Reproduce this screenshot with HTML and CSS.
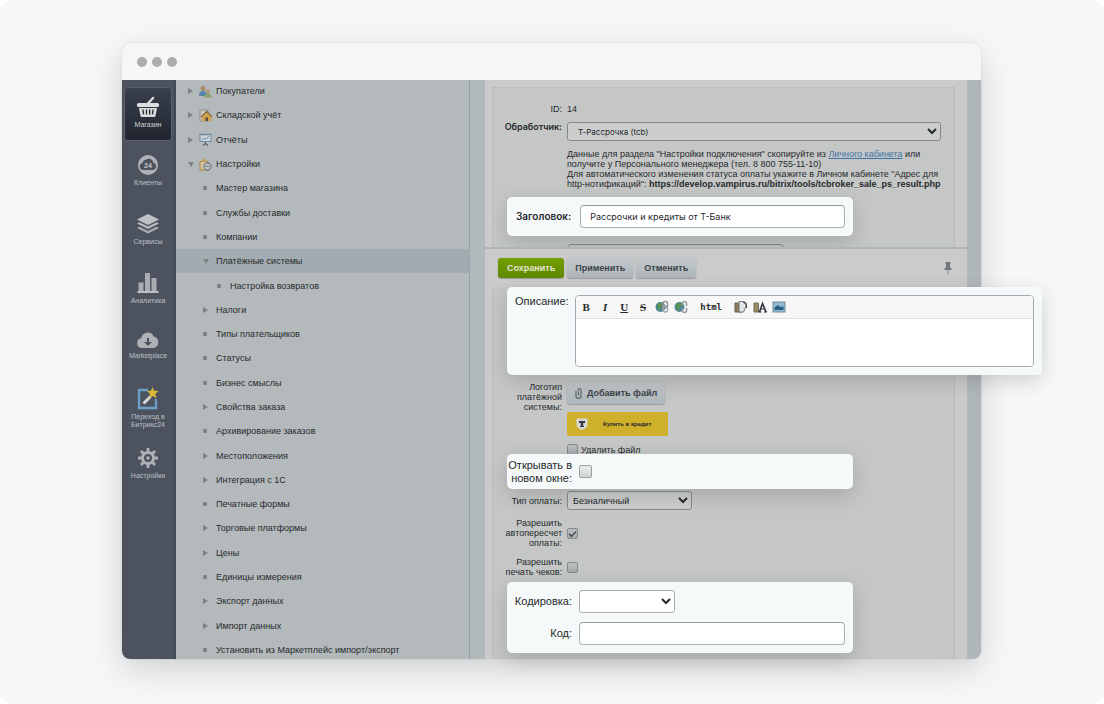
FILE: index.html
```
<!DOCTYPE html>
<html lang="ru">
<head>
    <meta charset="UTF-8">
    <meta name="viewport" content="width=device-width, initial-scale=1.0">
    <title>Настройка платёжной системы</title>
    <link rel="stylesheet" href="styles.css">
</head>
<body>
<div class="page">
    <div class="window">
        <div class="titlebar"><span></span><span></span><span></span></div>

        <div class="workspace">
            <!-- Главное меню -->
            <nav class="rail">
                <button class="rail-item active" type="button">
                    <svg width="24" height="22" viewBox="0 0 24 22"><path d="M11.500 8l5.500-6" stroke="#dcdddf" stroke-width="2.400" stroke-linecap="round"/><rect x="1" y="7" width="22" height="4" rx="1.500" fill="#dcdddf"/><path d="M3 12h18l-1.600 8.200q-.2.8-1 .8H5.600q-.8 0-1-.8z" fill="#dcdddf"/><path d="M7 13.500l.5 5M10.500 13.500v5M13.700 13.500v5M17 13.500l-.5 5" stroke="#2b303a" stroke-width="1.400"/></svg>
                    <span>Магазин</span>
                </button>
                <button class="rail-item" type="button">
                    <svg width="22" height="22" viewBox="0 0 22 22"><circle cx="11" cy="11" r="10" fill="#aeb2b7"/><path d="M6 16a3.600 3.600 0 0 1-.6-7A4 4 0 0 1 9 5.800a4.600 4.600 0 0 1 7.500 3A3.700 3.700 0 0 1 16 16z" fill="#4c535f"/><text x="11" y="14" text-anchor="middle" class="cloud-num">24</text></svg>
                    <span>Клиенты</span>
                </button>
                <button class="rail-item" type="button">
                    <svg width="24" height="22" viewBox="0 0 24 22"><path d="M12 1l11 5.500L12 12 1 6.500z" fill="#c0c3c6"/><path d="M1 10.500l2.500-1.200 8.500 4.200 8.500-4.200 2.500 1.200L12 16z" fill="#b5b9bd"/><path d="M1 15l2.500-1.200L12 18l8.500-4.200L23 15l-11 5.500z" fill="#a9adb2"/></svg>
                    <span>Сервисы</span>
                </button>
                <button class="rail-item" type="button">
                    <svg width="24" height="22" viewBox="0 0 24 22"><path d="M2.500 10.500h5V19h-5zM9 1h5v18H9zM15.500 6h5v13h-5z" fill="#a9adb2"/><path d="M1.500 19h21v2h-21z" fill="#bbbec2"/></svg>
                    <span>Аналитика</span>
                </button>
                <button class="rail-item" type="button">
                    <svg width="24" height="18" viewBox="0 0 24 18"><path d="M6 17a5 5 0 0 1-.8-9.900A6.500 6.500 0 0 1 17.600 5.600 5.800 5.800 0 0 1 17.500 17z" fill="#aeb2b7"/><path d="M11 7h2v4h3l-4 4-4-4h3z" fill="#4c535f"/></svg>
                    <span>Marketplace</span>
                </button>
                <button class="rail-item" type="button">
                    <svg width="24" height="24" viewBox="0 0 24 24"><path d="M12 4H3v18h17v-9" fill="none" stroke="#6d9fc6" stroke-width="2.400"/><path d="M7.500 17.500l7-7" stroke="#d5d7d9" stroke-width="3"/><path d="M16.500 1l1.700 3.800 4.300.2-3.200 3 1.200 4.200-3.700-2.200-3.700 2.200 1-4.200-3.100-3 4-.3z" fill="#dcb736"/></svg>
                    <span>Переход в Битрикс24</span>
                </button>
                <button class="rail-item" type="button">
                    <svg width="22" height="22" viewBox="0 0 22 22"><circle cx="11" cy="11" r="5.500" fill="none" stroke="#aeb2b7" stroke-width="3"/><path d="M11 1v4M11 17v4M1 11h4M17 11h4M3.900 3.900l2.800 2.800M15.300 15.300l2.800 2.800M3.900 18.100l2.800-2.800M15.300 6.700l2.800-2.800" stroke="#aeb2b7" stroke-width="2.800"/><circle cx="11" cy="11" r="1.800" fill="#aeb2b7"/></svg>
                    <span>Настройки</span>
                </button>
            </nav>

            <!-- Дерево разделов -->
            <aside class="tree">
                <ul>
                    <li class="closed"><svg width="13" height="13" viewBox="0 0 13 13"><circle cx="4" cy="3.500" r="2.500" fill="#a88a66"/><path d="M0 11q0-5 4-5t4 5z" fill="#5583ad"/><circle cx="9" cy="6" r="2" fill="#b39873"/><path d="M5.500 12.500q0-4.500 3.500-4.500t3.500 4.500z" fill="#8b9d70"/></svg><a href="#">Покупатели</a></li>
                    <li class="closed"><svg width="13" height="13" viewBox="0 0 13 13"><path d="M1 1h8v11H1z" fill="#c9c7bf" stroke="#8d9190"/><path d="M3 7.500L7.800 3l4.700 4.500V12H3z" fill="#d0a34e"/><path d="M2 8l5.800-5.500L13 8" fill="none" stroke="#85683a" stroke-width="1.300"/><path d="M6.500 8.500H9V12H6.500z" fill="#55493a"/></svg><a href="#">Складской учёт</a></li>
                    <li class="closed"><svg width="13" height="13" viewBox="0 0 13 13"><rect x="1" y="1.500" width="11" height="7" fill="#cbd4da" stroke="#6f8ba0"/><path d="M.5 1.500h12" stroke="#6f8ba0" stroke-width="1.500"/><path d="M3 7l2-1.500 2 .5 3-3" fill="none" stroke="#6990ad"/><path d="M6.500 9v2M4 12.500l2.500-2 2.500 2" fill="none" stroke="#59636a" stroke-width="1.200"/></svg><a href="#">Отчёты</a></li>
                    <li class="opened"><svg width="13" height="13" viewBox="0 0 13 13"><path d="M1 3.500h8v8.500H1z" fill="#d1c5aa" stroke="#b4883b"/><path d="M3 3.500q0-3 2-3t2 3z" fill="#c4a56f"/><circle cx="8.500" cy="8.500" r="3.500" fill="#c1c5c7" stroke="#7e8588" stroke-width="1.400"/><path d="M6.500 8.500h4" stroke="#71787b"/></svg><a href="#">Настройки</a></li>
                    <li class="sub leaf"><a href="#">Мастер магазина</a></li>
                    <li class="sub leaf"><a href="#">Службы доставки</a></li>
                    <li class="sub leaf"><a href="#">Компании</a></li>
                    <li class="sub opened current"><a href="#">Платёжные системы</a></li>
                    <li class="subsub leaf"><a href="#">Настройка возвратов</a></li>
                    <li class="sub closed"><a href="#">Налоги</a></li>
                    <li class="sub leaf"><a href="#">Типы плательщиков</a></li>
                    <li class="sub leaf"><a href="#">Статусы</a></li>
                    <li class="sub leaf"><a href="#">Бизнес смыслы</a></li>
                    <li class="sub closed"><a href="#">Свойства заказа</a></li>
                    <li class="sub leaf"><a href="#">Архивирование заказов</a></li>
                    <li class="sub closed"><a href="#">Местоположения</a></li>
                    <li class="sub closed"><a href="#">Интеграция с 1С</a></li>
                    <li class="sub leaf"><a href="#">Печатные формы</a></li>
                    <li class="sub closed"><a href="#">Торговые платформы</a></li>
                    <li class="sub closed"><a href="#">Цены</a></li>
                    <li class="sub leaf"><a href="#">Единицы измерения</a></li>
                    <li class="sub closed"><a href="#">Экспорт данных</a></li>
                    <li class="sub closed"><a href="#">Импорт данных</a></li>
                    <li class="sub leaf"><a href="#">Установить из Маркетплейс импорт/экспорт</a></li>
                </ul>
            </aside>

            <!-- Форма -->
            <form class="editor">
                <section class="panel panel-top">
                    <div class="row row-id"><span class="label">ID:</span><span>14</span></div>
                    <div class="row row-handler">
                        <label class="label strong" for="handler">Обработчик:</label>
                        <select id="handler" class="select wide"><option>Т-Рассрочка (tcb)</option></select>
                    </div>
                    <p class="hint">Данные для раздела "Настройки подключения" скопируйте из <a href="#">Личного кабинета</a> или<br>получите у Персонального менеджера (тел. 8 800 755-11-10)<br>Для автоматического изменения статуса оплаты укажите в Личном кабинете "Адрес для<br>http-нотификаций": <b>https://develop.vampirus.ru/bitrix/tools/tcbroker_sale_ps_result.php</b></p>
                    <div class="card card-title">
                        <label class="strong" for="title">Заголовок:</label>
                        <input id="title" class="field" type="text" value="Рассрочки и кредиты от Т-Банк">
                    </div>
                    <input class="field cut" type="text" aria-label="Название">
                </section>

                <div class="actions">
                    <button class="btn save" type="button">Сохранить</button>
                    <button class="btn" type="button">Применить</button>
                    <button class="btn" type="button">Отменить</button>
                    <button class="pin" type="button" aria-label="Закрепить"><svg width="8" height="12" viewBox="0 0 8 12"><path d="M1.500 0h5v1.500H6V5l1.500 1.500V8h-7V6.500L2 5V1.500h-.5z" fill="#72787c"/><path d="M4 8v4" stroke="#8b9094"/></svg></button>
                </div>

                <section class="panel panel-bottom">
                    <div class="card card-text">
                        <label for="descr">Описание:</label>
                        <div class="html-editor">
                            <div class="toolbar">
                                <button type="button"><b>B</b></button>
                                <button type="button"><b><i>I</i></b></button>
                                <button type="button"><b><u>U</u></b></button>
                                <button type="button"><b><s>S</s></b></button>
                                <button type="button" aria-label="Ссылка"><svg width="14" height="14" viewBox="0 0 14 14"><circle cx="5.500" cy="7" r="5" fill="#4c84a0"/><path d="M2 4l4-1.500L8 5 5 8l1 3-3-1z" fill="#5b944e"/><rect x="8" y="1.500" width="4.500" height="6" rx="2" fill="none" stroke="#8c9093" stroke-width="1.500"/><rect x="8" y="6" width="4.500" height="6" rx="2" fill="none" stroke="#a2a5a7" stroke-width="1.500"/></svg></button>
                                <button type="button" aria-label="Убрать ссылку"><svg width="14" height="14" viewBox="0 0 14 14"><circle cx="5.500" cy="7" r="5" fill="#4c84a0"/><path d="M2 4l4-1.500L8 5 5 8l1 3-3-1z" fill="#5b944e"/><path d="M8.500 6V3.500q0-2 2-2t2 2V6M8.500 8v2.500q0 2 2 2t2-2V8" fill="none" stroke="#9b9ea0" stroke-width="1.600"/></svg></button>
                                <button class="source" type="button">html</button>
                                <button type="button" aria-label="Вставить"><svg width="14" height="14" viewBox="0 0 14 14"><path d="M1 3h7v9H1z" fill="#8c7b55" stroke="#67624d"/><path d="M5 1.500h4l3.500 4-3 6.500H5z" fill="#e2e6e8" stroke="#6e777b"/><path d="M9 2q4 0 3.500 6" fill="none" stroke="#414a4e" stroke-width="1.300"/></svg></button>
                                <button type="button" aria-label="Вставить текст"><svg width="14" height="14" viewBox="0 0 14 14"><path d="M1 3h4.500v9H1z" fill="#9a8c62" stroke="#777057"/><path d="M6.500 12l3-8.500L13 12" fill="none" stroke="#30353b" stroke-width="1.600"/><path d="M8 9h4M5.500 12h3M11 12h3" stroke="#30353b"/></svg></button>
                                <button type="button" aria-label="Картинка"><svg width="14" height="14" viewBox="0 0 14 14"><rect x="1" y="2" width="12" height="10" fill="#92bad2" stroke="#738c9c"/><path d="M2.500 10V7.500L6 5l2 2 3.500-.5V10z" fill="#285d85"/></svg></button>
                            </div>
                            <textarea id="descr"></textarea>
                        </div>
                    </div>

                    <div class="row row-logo">
                        <span class="label">Логотип платёжной системы:</span>
                        <div class="logo-cell">
                            <button class="btn file" type="button"><svg width="7" height="11" viewBox="0 0 7 11"><path d="M3.500 3v4.500M1 3v5q0 2.300 2.500 2.300T6 8V2.500Q6 .7 4.500.7T3 2.500" fill="none" stroke="#666c73" stroke-width="1.300"/></svg>Добавить файл</button>
                            <div class="credit"><svg width="12" height="12" viewBox="0 0 12 12"><path d="M.5.500h11v6Q11.500 10 6 12 .5 10 .5 6.500z" fill="#d8d8d4"/><path d="M3 3h6v2H7.200v3H8v1H4V8h.8V5H3z" fill="#35383a"/></svg><span>Купить в кредит</span></div>
                            <label class="check-line"><input class="check" type="checkbox">Удалить файл</label>
                        </div>
                    </div>

                    <div class="card card-check">
                        <label for="newwin">Открывать в новом окне:</label>
                        <input id="newwin" class="check big" type="checkbox">
                    </div>

                    <div class="row">
                        <label class="label" for="paytype">Тип оплаты:</label>
                        <select id="paytype" class="select"><option>Безналичный</option></select>
                    </div>
                    <div class="row">
                        <label class="label" for="recalc">Разрешить автопересчет оплаты:</label>
                        <input id="recalc" class="check" type="checkbox" checked>
                    </div>
                    <div class="row">
                        <label class="label" for="print">Разрешить печать чеков:</label>
                        <input id="print" class="check" type="checkbox">
                    </div>

                    <div class="card card-code">
                        <label for="enc">Кодировка:</label>
                        <select id="enc" class="select white"><option></option></select>
                        <label for="code">Код:</label>
                        <input id="code" class="field" type="text">
                    </div>
                </section>
            </form>
            <div class="edge"></div>
        </div>
    </div>
</div>
</body>
</html>
```
FILE: styles.css
```
* {
    box-sizing: border-box;
}
body {
    margin: 0;
    background: #fff;
    font-family: "Liberation Sans", Arial, sans-serif;
    font-size: 9px;
    line-height: 10px;
    color: #26292b;
}
button, input, select, textarea {
    font: inherit;
    color: inherit;
    margin: 0;
}
button {
    padding: 0;
    border: 0;
    background: none;
}
.page {
    min-height: 100vh;
    padding: 43px 123px 44px 122px;
    background: #f5f7f8;
    border-radius: 14px;
    overflow: hidden;
}
/* Окно */
.window {
    border-radius: 10px;
    box-shadow: 0 10px 32px rgba(0, 0, 0, 0.16), 0 0 2px rgba(0, 0, 0, 0.14);
}
.titlebar {
    display: flex;
    align-items: center;
    gap: 5px;
    height: 37px;
    padding-left: 15px;
    background: #f7f5f6;
    border-radius: 10px 10px 0 0;
}
.titlebar span {
    width: 10px;
    height: 10px;
    border-radius: 50%;
    background: #adadad;
}
.workspace {
    display: flex;
}
/* Левая колонка */
.rail {
    display: flex;
    flex-direction: column;
    gap: 16px;
    width: 54px;
    padding: 8px 3px 0;
    background: #4c535f;
    border-right: 2px solid #434a57;
    border-radius: 0 0 0 8px;
}
.rail-item {
    display: flex;
    flex-direction: column;
    align-items: center;
    gap: 3px;
    font-size: 7px;
    line-height: 8px;
    color: #bcc0c5;
}
.rail-item span {
    min-height: 18px;
}
.rail-item.active {
    height: 52px;
    margin-bottom: -2px;
    padding-top: 8px;
    background: linear-gradient(#3a404c, #20252f);
    border-radius: 3px;
    box-shadow: 0 0 0 1px #5b626d;
    color: #d0d2d5;
}
.cloud-num {
    font-size: 7px;
    font-weight: bold;
    fill: #c0c3c6;
}
.tree {
    width: 294px;
    overflow: hidden;
    background: #b4babc;
    border-right: 1px solid #94a3aa;
}
.tree ul {
    display: flex;
    flex-direction: column;
    height: calc(100% + 4px);
    margin: -1px 0 -3px;
    padding: 0;
    list-style: none;
}
.tree li {
    display: flex;
    flex: 1 1 0;
    align-items: center;
    padding-left: 12px;
}
.tree li::before {
    content: '';
    flex: none;
    margin-right: 6px;
}
.tree li svg {
    flex: none;
    margin-right: 4px;
}
.tree li a {
    color: inherit;
    text-decoration: none;
    white-space: nowrap;
}
.tree .closed::before {
    border-left: 5px solid #7d8385;
    border-top: 3px solid transparent;
    border-bottom: 3px solid transparent;
}
.tree .opened::before {
    border-top: 5px solid #7d8385;
    border-left: 3px solid transparent;
    border-right: 3px solid transparent;
    margin-right: 5px;
}
.tree .leaf::before {
    width: 4px;
    height: 4px;
    border-radius: 1px;
    background: #7d8385;
}
.tree .sub {
    padding-left: 27px;
}
.tree .subsub {
    padding-left: 41px;
}
.tree .closed.sub::before {
    margin-right: 8px;
}
.tree .opened.sub::before {
    margin-right: 7px;
}
.tree .leaf::before {
    margin-right: 9px;
}
.tree .current {
    background: #a2abaf;
}
/* Форма */
.editor {
    flex: 1;
    min-width: 0;
    margin: 0;
    padding: 7px 12px 0 7px;
    border-left: 15px solid #b2b9bb;
    background: #cbcbcb;
}
.panel {
    border-left: 1px solid #babdbe;
    border-right: 1px solid #babdbe;
    background: #c5c7c7;
}
.panel-top {
    height: 160px;
    border-top: 1px solid #babdbe;
    padding-top: 16px;
    overflow: hidden;
}
.row {
    display: flex;
    align-items: center;
    gap: 5px;
    margin-bottom: 9px;
}
.label {
    width: 69px;
    flex: none;
    text-align: right;
}
.row-id {
    margin-bottom: 8px;
}
.row-handler {
    align-items: flex-start;
    margin-bottom: 8px;
}
.strong {
    font-family: Inter, sans-serif;
    font-weight: 600;
}
.select {
    width: 125px;
    height: 19px;
    padding: 0 1px;
    border: 1px solid #85898b;
    border-radius: 3px;
    background: #cccdcd;
}
.select.wide {
    flex: 1;
    margin-right: 13px;
    padding-left: 6px;
    font-family: Inter, sans-serif;
    font-size: 8px;
}
.select.white {
    width: 96px;
    height: 23px;
    background: #fff;
    border-color: #a9adaf;
}
.hint {
    margin: 0 0 8px 74px;
    white-space: nowrap;
}
.hint a {
    color: #3f73a8;
}
.field {
    height: 23px;
    padding: 0 9px;
    border: 1px solid #a9b1b4;
    border-top-color: #949b9e;
    border-radius: 4px;
    background: #fff;
}
.field.cut {
    display: block;
    width: 217px;
    margin: 8px 0 0 74px;
    background: #c5c7c7;
    border-color: #85898b;
}
/* Светлые карточки */
.card {
    position: relative;
    margin-left: 14px;
    margin-right: 101px;
    border-radius: 5px;
    background: #f5f9fa;
    box-shadow: 0 6px 20px rgba(0, 0, 0, 0.16);
    font-size: 11px;
    line-height: 13px;
}
.card-title {
    display: flex;
    align-items: center;
    gap: 9px;
    height: 39px;
    padding: 0 8px 0 9px;
    font-size: 10px;
}
.card-title .field {
    flex: 1;
    min-width: 0;
    font-family: Inter, sans-serif;
    font-size: 9px;
}
.actions {
    display: flex;
    align-items: center;
    gap: 3px;
    height: 40px;
    margin: 0 -12px 0 -7px;
    padding: 0 15px 0 13px;
    border-top: 2px solid #b0b7b9;
    background: #cbcbcb;
}
.btn {
    height: 20px;
    padding: 0 8px;
    border-radius: 3px;
    background: linear-gradient(#c4c9cc, #adb5b9);
    box-shadow: 0 0 1px #777f83, 0 1px 1px rgba(0, 0, 0, 0.2);
    font-weight: bold;
    color: #3c4449;
}
.btn.save {
    padding: 0 9px;
    background: linear-gradient(#75a000, #5f8600);
    color: #e1e6d2;
}
.pin {
    margin-left: auto;
    line-height: 0;
}
.panel-bottom {
    padding-bottom: 6px;
}
.card-text {
    display: flex;
    gap: 6px;
    height: 88px;
    margin-right: -88px;
    margin-bottom: 7px;
    padding: 8px;
}
.html-editor {
    display: flex;
    flex-direction: column;
    flex: 1;
    border: 1px solid #a4abae;
    border-radius: 4px;
    background: #fff;
    overflow: hidden;
}
.toolbar {
    display: flex;
    align-items: center;
    height: 23px;
    padding-left: 1px;
    background: #f7f7f7;
    border-bottom: 1px solid #dfe2e3;
}
.toolbar button {
    width: 19px;
    font-family: "Liberation Serif", serif;
    font-size: 11px;
    line-height: 14px;
    text-align: center;
}
.toolbar svg {
    display: block;
    margin: auto;
}
.toolbar .source {
    width: 41px;
    font-family: "DejaVu Sans Mono", monospace;
    font-size: 9px;
    font-weight: bold;
}
.html-editor textarea {
    flex: 1;
    border: 0;
    resize: none;
    background: #fff;
}
.row-logo {
    align-items: flex-start;
    margin-bottom: 0;
}
.logo-cell {
    display: flex;
    flex-direction: column;
    align-items: flex-start;
    gap: 8px;
}
.btn.file {
    display: flex;
    align-items: center;
    gap: 5px;
    height: 22px;
}
.credit {
    display: flex;
    align-items: center;
    width: 101px;
    height: 24px;
    padding-left: 9px;
    gap: 15px;
    border-radius: 2px;
    background: #cfb02b;
    font-size: 6px;
    font-weight: bold;
}
.check-line {
    display: flex;
    align-items: center;
    gap: 3px;
}
.check {
    appearance: none;
    flex: none;
    width: 11px;
    height: 11px;
    border: 1px solid #84898b;
    border-radius: 2px;
    background: linear-gradient(#bcc0c1, #a5abad);
}
.check:checked::after {
    content: '';
    display: block;
    width: 6px;
    height: 3px;
    margin: 2px 1px;
    border-left: 1px solid #25292b;
    border-bottom: 1px solid #25292b;
    transform: rotate(-45deg);
}
.check.big {
    width: 13px;
    height: 13px;
    border-color: #9b9fa1;
    background: linear-gradient(#eceeee, #cfd2d3);
}
.card-check {
    display: flex;
    align-items: center;
    gap: 7px;
    height: 35px;
    margin-top: -1px;
    margin-bottom: 2px;
}
.card-check label {
    width: 65px;
    text-align: right;
}
.card-check + .row {
    margin-bottom: 8px;
}
.card-code {
    display: grid;
    grid-template-columns: 65px 1fr;
    gap: 9px 7px;
    align-items: center;
    margin-top: -4px;
    padding: 8px 8px 8px 0;
}
.card-code label {
    text-align: right;
}
.edge {
    width: 14px;
    background: #b0b7b9;
    border-radius: 0 0 8px 0;
}
```
